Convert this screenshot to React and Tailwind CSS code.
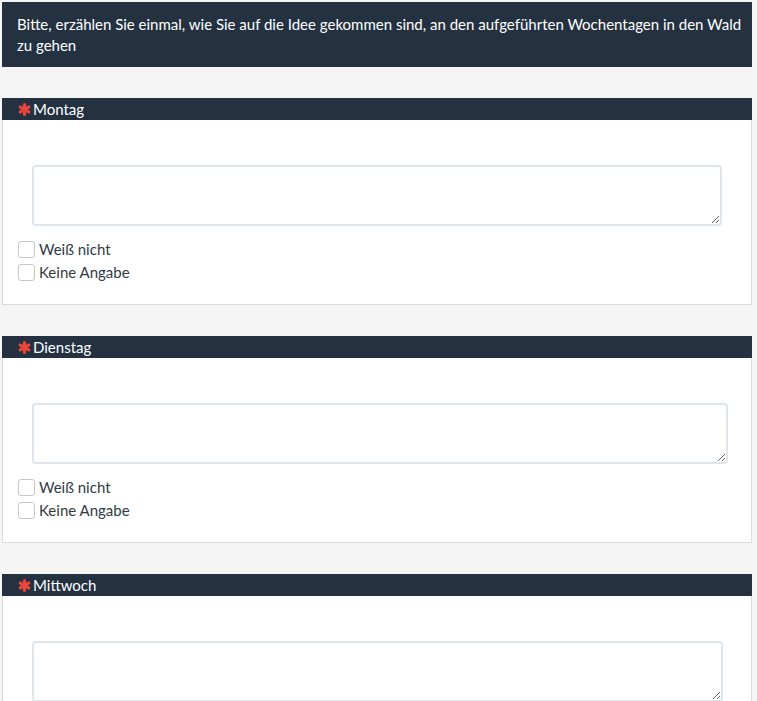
import React from 'react';

const days = [
  { name: 'Montag', width: 'w-[690px]' },
  { name: 'Dienstag', width: 'w-[696px]' },
  { name: 'Mittwoch', width: 'w-[691px]' },
];

function Star() {
  return (
    <svg width="13" height="13" viewBox="0 0 24 24" className="shrink-0">
      <g stroke="#e8463a" strokeWidth="6" strokeLinecap="round">
        <line x1="12" y1="3" x2="12" y2="21" />
        <line x1="4.2" y1="7.5" x2="19.8" y2="16.5" />
        <line x1="4.2" y1="16.5" x2="19.8" y2="7.5" />
      </g>
    </svg>
  );
}

function Check({ label }) {
  return (
    <label className="flex items-center h-[23px]">
      <span className="w-[17px] h-[17px] rounded-[3px] border border-[#c8c8c8] bg-white shrink-0" />
      <span className="ml-[4px] text-[15px] text-[#333a44]">{label}</span>
    </label>
  );
}

export default function App() {
  return (
    <div className="h-[701px] overflow-hidden bg-[#f5f5f5] pt-[2px] pl-[2px] w-[757px]" style={{ fontFamily: 'Lato, "Open Sans", sans-serif' }}>
      {/* Frage */}
      <div className="w-[750px] h-[65px] bg-[#243141] text-white text-[15px] leading-[21px] pl-[15px] pr-[6px] pt-[12px]">
        Bitte, erzählen Sie einmal, wie Sie auf die Idee gekommen sind, an den aufgeführten Wochentagen in den Wald zu gehen
      </div>

      <div className="mt-[31px] flex flex-col gap-[31px]">
        {days.map((d) => (
          <div key={d.name} className="w-[750px]">
            <div className="h-[22px] bg-[#243141] flex items-center pl-[16px] gap-[2px] text-white text-[15px]">
              <Star />
              <span>{d.name}</span>
            </div>
            <div className="bg-white border border-t-0 border-[#dcdcdc] h-[185px] pl-[15px]">
              <div className="pt-[45px] pl-[14px]">
                <textarea className={`${d.width} h-[61px] block border-2 border-[#dfe6eb] rounded-[4px] outline-none resize-y`} />
              </div>
              <div className="mt-[12px]">
                <Check label="Weiß nicht" />
                <Check label="Keine Angabe" />
              </div>
            </div>
          </div>
        ))}
      </div>
    </div>
  );
}
